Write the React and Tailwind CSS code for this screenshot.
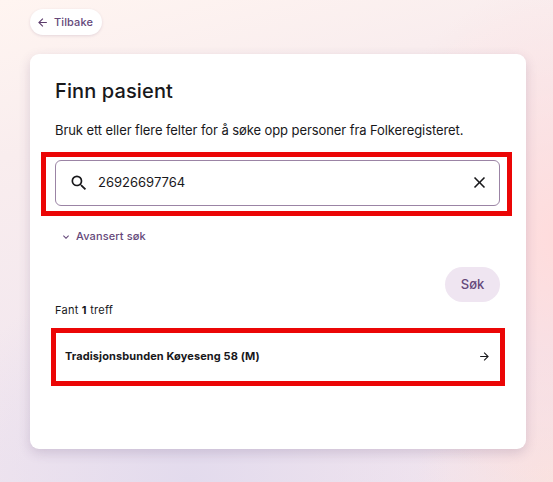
import { useState } from "react";
import { MdArrowBack, MdArrowForward, MdClose, MdExpandMore, MdSearch } from "react-icons/md";

const patients = [{ id: 1, name: "Tradisjonsbunden Køyeseng 58 (M)" }];

export default function App() {
  const [query, setQuery] = useState("26926697764");

  return (
    <div className="min-h-screen overflow-hidden px-[30px] pt-[9px] font-['Inter',sans-serif] text-[#18181b] bg-[radial-gradient(ellipse_260px_220px_at_190px_480px,#e3dbed_0%,transparent_100%),radial-gradient(ellipse_200px_260px_at_560px_240px,#ffdcdc_0%,transparent_100%),radial-gradient(ellipse_140px_130px_at_553px_482px,#fae2e0_0%,transparent_100%),linear-gradient(165deg,#fff5f1_0%,#f9edee_25%,#f0e5ef_75%,#f0e3ee_100%)]">
      <button className="flex h-[26px] w-[72px] items-center gap-[5px] rounded-full bg-white pl-[6px] text-[11px] font-medium tracking-[0.12px] text-[#65487a] shadow-[0_1px_3px_rgba(80,40,90,0.14)]">
        <MdArrowBack className="size-[13px] text-[#5b3b6b]" />
        Tilbake
      </button>

      <main className="mt-[19px] h-[395px] w-[496px] rounded-[9px] bg-white pl-[25px] pr-[26px] pt-[25px] shadow-[0_4px_12px_rgba(80,50,100,0.18)]">
        <h1 className="text-[20px] leading-6 font-medium tracking-[0.12px]">Finn pasient</h1>
        <p className="mt-[17px] text-[13px] leading-5 tracking-[-0.085px] whitespace-nowrap">
          Bruk ett eller flere felter for å søke opp personer fra Folkeregisteret.
        </p>

        <div className="relative mt-5 flex h-[46px] items-center rounded-[6px] border border-[#9b84a5] pr-[10px] pl-[13px]">
          <MdSearch className="mb-px size-5 shrink-0" />
          <input
            className="ml-[9px] min-w-0 flex-1 text-[13px] outline-none"
            value={query}
            onChange={(e) => setQuery(e.target.value)}
          />
          <button onClick={() => setQuery("")}>
            <MdClose className="mb-[2px] size-[19px]" />
          </button>
          <div className="pointer-events-none absolute -top-[9px] -right-[13px] -bottom-[11px] -left-[15px] border-5 border-[#eb0606]" />
        </div>

        <button className="mt-[22px] ml-[5px] flex h-4 items-center gap-1 text-[11px] font-medium tracking-[0.12px] text-[#65487a]">
          <MdExpandMore className="mt-px size-3" />
          Avansert søk
        </button>

        <div className="mt-[23px] flex justify-end">
          <button className="h-[35px] w-[55px] rounded-full bg-[#efe5f1] text-[13px] font-medium text-[#65487a]">
            Søk
          </button>
        </div>

        <p className="text-[11px] leading-4 tracking-[0.25px]">
          Fant <b>{patients.length}</b> treff
        </p>

        {patients.map((patient) => (
          <button
            key={patient.id}
            className="mt-[15px] ml-px flex h-12 w-[444px] items-center justify-between pr-[9px] pb-[2px] pl-[9px] text-[11px] font-bold tracking-[0.1px] outline-5 outline-[#eb0606]"
          >
            {patient.name}
            <MdArrowForward className="size-[13px]" />
          </button>
        ))}
      </main>
    </div>
  );
}
